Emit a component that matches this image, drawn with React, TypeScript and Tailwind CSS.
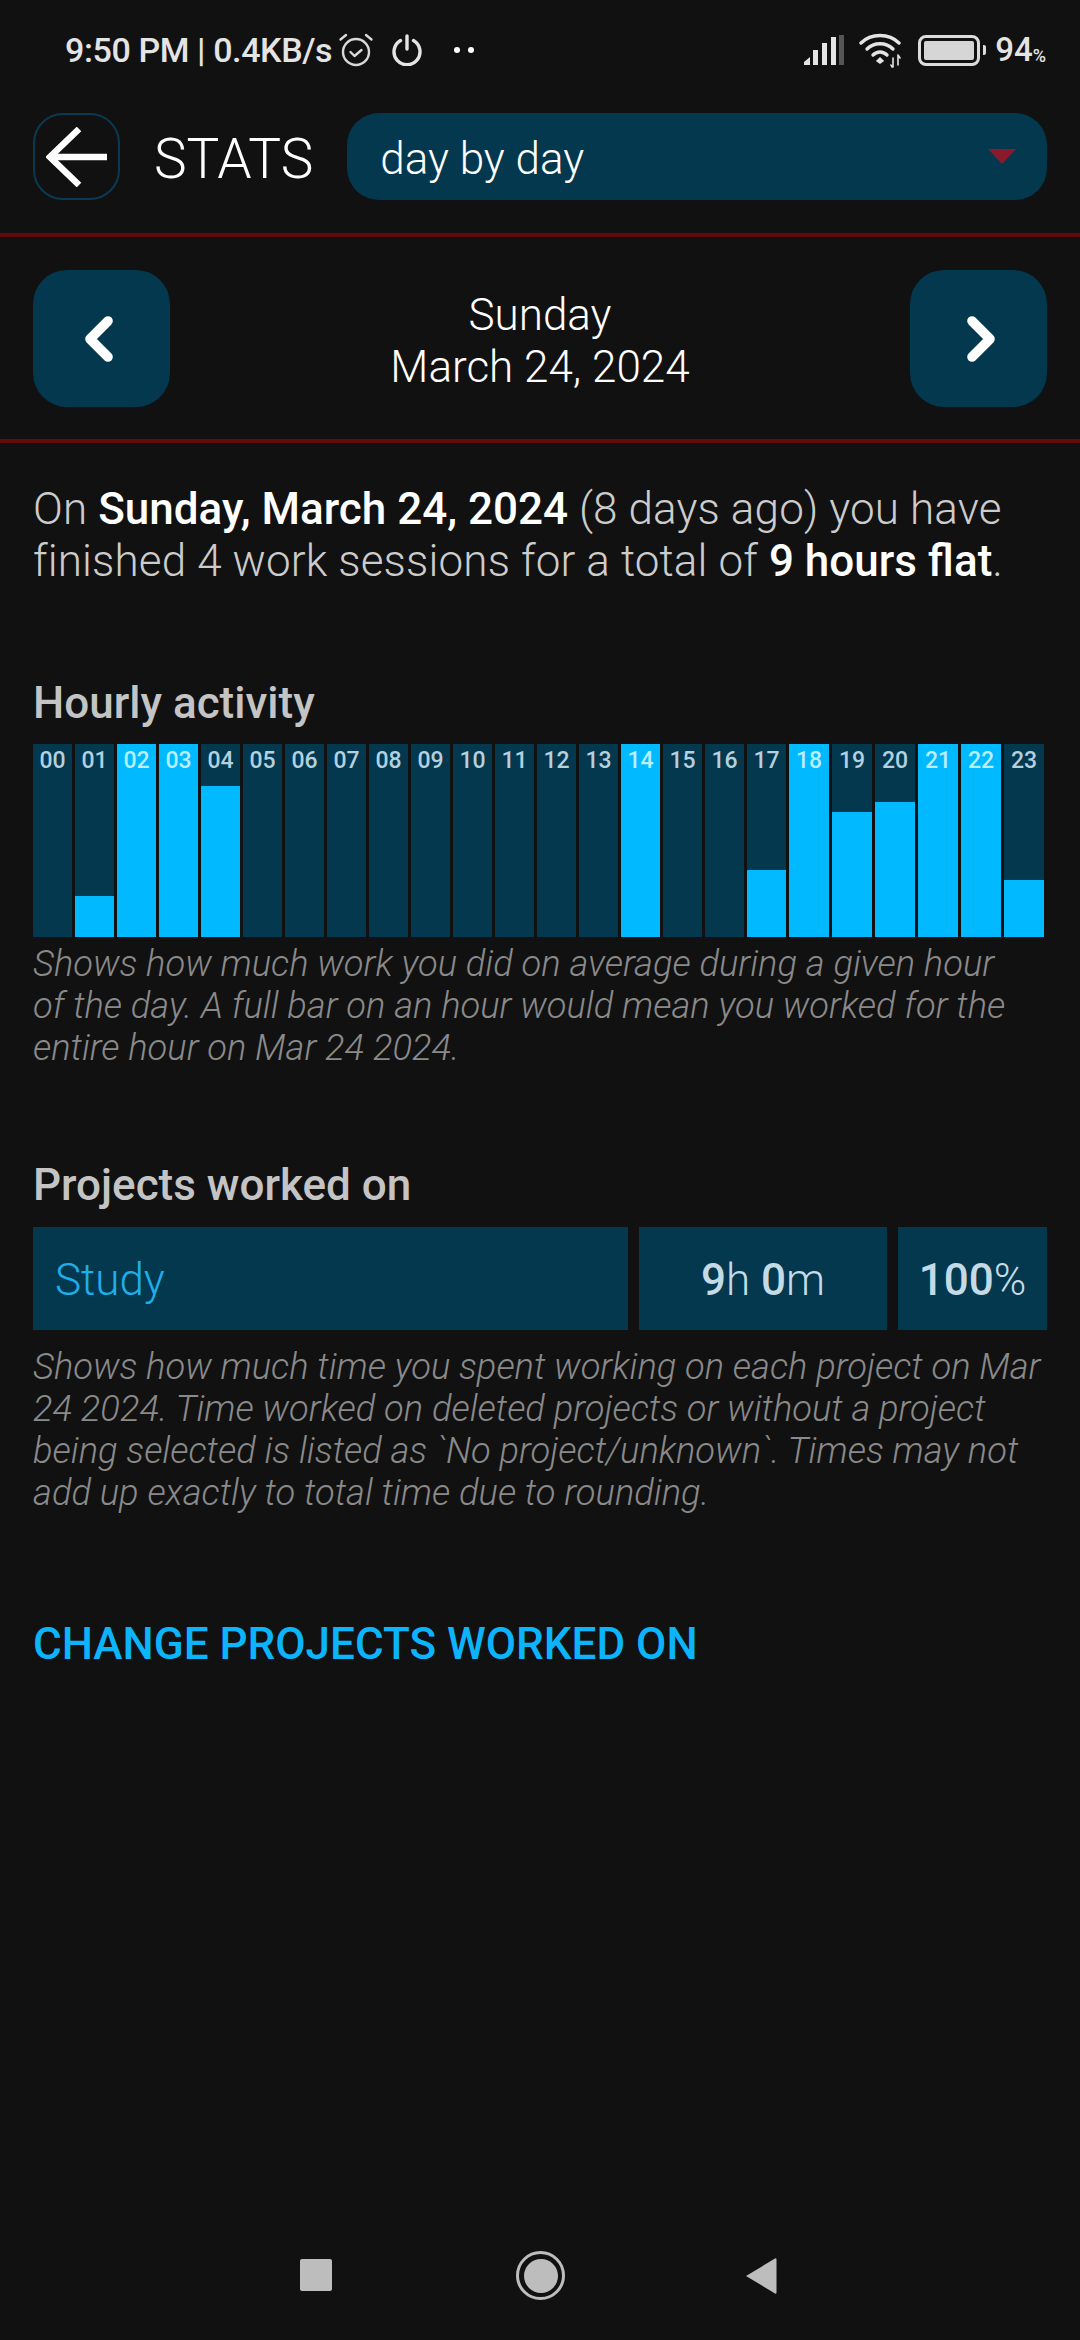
import { ChevronLeft, ChevronRight } from 'lucide-react';

const hours = [
  0, 41, 193, 193, 151, 0, 0, 0, 0, 0, 0, 0, 0, 0, 193, 0, 0, 67, 193, 125, 135, 193, 193, 57,
];

function StatusBar() {
  return (
    <div className="flex h-[113px] items-start justify-between pl-[65px] pr-[34px] pt-[32px] text-[#e4e4e4]">
      <div className="flex items-center">
        <span className="text-[34px] leading-[36px] font-medium tracking-[-0.4px]">9:50 PM | 0.4KB/s</span>
        {/* Alarm */}
        <svg viewBox="0 0 36 36" className="ml-[6px] h-[36px] w-[36px]" fill="none" stroke="#d8d8d8" strokeWidth="2.4" strokeLinecap="round" strokeLinejoin="round">
          <circle cx="18" cy="20" r="13" />
          <path d="M12.5 20l4 4 7-6" />
          <path d="M2.5 7.5L8 3M33.5 7.5L28 3" />
        </svg>
        {/* Power */}
        <svg viewBox="0 0 32 32" className="ml-[17px] h-[32px] w-[32px]" fill="none" stroke="#e4e4e4" strokeWidth="3.4" strokeLinecap="round">
          <path d="M9.5 6.5a13 13 0 1 0 13 0" />
          <path d="M16 2v13" />
        </svg>
        <div className="ml-[31px] flex gap-[8px]">
          <div className="h-[6px] w-[6px] rounded-full bg-white" />
          <div className="h-[6px] w-[6px] rounded-full bg-white" />
        </div>
      </div>
      <div className="flex items-center">
        {/* Signal */}
        <svg viewBox="0 0 40 30" className="h-[30px] w-[40px]">
          <path d="M0 30v-3l6-5v8z" fill="#e4e4e4" />
          <rect x="9" y="15" width="5" height="15" fill="#e4e4e4" />
          <rect x="18" y="8" width="5" height="22" fill="#e4e4e4" />
          <rect x="27" y="2" width="5" height="28" fill="#e4e4e4" />
          <rect x="35" y="0" width="5" height="30" fill="#555555" />
        </svg>
        {/* Wifi */}
        <svg viewBox="0 0 44 36" className="ml-[15px] h-[36px] w-[44px]" fill="none" stroke="#e4e4e4" strokeWidth="3.4" strokeLinecap="round">
          <path d="M2 11C12 1 30 1 40 11" />
          <path d="M8 17c7-7 19-7 26 0" />
          <path d="M14 23c4-4 10-4 14 0" />
          <path d="M18 29l3-3 3 3-3 2z" fill="#e4e4e4" strokeWidth="1.5" />
          <path d="M34 26v9M32 33l1 2M39 23v10M39 23l2 3" strokeWidth="1.6" />
        </svg>
        {/* Battery */}
        <div className="ml-[15px] flex h-[31px] w-[62px] items-stretch rounded-[8px] border-[3px] border-[#dcdcdc] p-[3px]">
          <div className="flex-1 rounded-[2px] bg-[#d6d6d6]" />
        </div>
        <div className="ml-[3px] h-[10px] w-[3px] rounded-r-[2px] bg-[#dcdcdc]" />
        <span className="ml-[9px] text-[33px] leading-[36px] font-medium">94</span>
        <span className="text-[18px] leading-[18px] mt-[12px] font-medium">%</span>
      </div>
    </div>
  );
}

function Header() {
  return (
    <div className="flex items-stretch px-[33px] h-[87px]">
      <div className="flex w-[87px] items-center justify-center rounded-[30px] border-[2px] border-[#0a3a52]">
        <svg viewBox="0 0 62 60" className="h-[60px] w-[62px]" fill="none" stroke="#ffffff" strokeWidth="6.5">
          <path d="M33 2L4 30l29 28" />
          <path d="M4 30h57" />
        </svg>
      </div>
      <span className="ml-[34px] self-center pt-[5px] text-[55px] leading-[60px] font-light text-white">STATS</span>
      <div className="ml-[34px] flex flex-1 items-center justify-between rounded-[32px] bg-[#03384f] pl-[33px] pr-[31px]">
        <span className="pt-[5px] text-[44px] leading-[52px] font-light text-white">day by day</span>
        <div className="h-0 w-0 border-x-[14px] border-t-[15px] border-x-transparent border-t-[#8a1a2b]" />
      </div>
    </div>
  );
}

function NavButton({ next }: { next?: boolean }) {
  return (
    <div className="flex h-[137px] w-[137px] items-center justify-center rounded-[34px] bg-[#03384f] text-white">
      {next ? (
        <ChevronRight size={72} strokeWidth={3.2} className="ml-[5px]" />
      ) : (
        <ChevronLeft size={72} strokeWidth={3.2} className="mr-[5px]" />
      )}
    </div>
  );
}

export default function App() {
  return (
    <div
      className="flex h-[2340px] w-[1080px] flex-col overflow-hidden bg-[#111111]"
      style={{ fontFamily: 'Roboto, sans-serif' }}
    >
      <StatusBar />
      <Header />

      <div className="mt-[33px] h-[4px] bg-[#640a0c]" />

      {/* Date picker */}
      <div className="flex items-center justify-between px-[33px] py-[33px]">
        <NavButton />
        <div className="pt-[4px] text-center text-[44px] leading-[52px] font-light text-white">
          <div>Sunday</div>
          <div>March 24, 2024</div>
        </div>
        <NavButton next />
      </div>

      <div className="-mt-[1px] h-[4px] bg-[#640a0c]" />

      <div className="px-[33px]">
        {/* Summary */}
        <p className="mt-[40px] text-[44px] leading-[52px] font-light tracking-[0.14px] text-[#cccccc]">
          On <b className="font-medium tracking-normal text-white">Sunday, March 24, 2024</b> (8 days ago) you have finished 4 work sessions for a total of <b className="font-medium tracking-normal text-white">9 hours flat</b>.
        </p>

        {/* Hourly activity */}
        <h2 className="mt-[92px] text-[44px] leading-[48px] font-medium text-[#c4c4c4]">Hourly activity</h2>
        <div className="mt-[17px] grid h-[193px] grid-cols-[repeat(18,39px)_repeat(6,40px)] gap-[3px]">
          {hours.map((h, i) => (
            <div key={i} className="relative bg-[#03384f]">
              <div className="absolute inset-x-0 bottom-0 bg-[#00b9ff]" style={{ height: h }} />
              <span
                className={`absolute inset-x-0 top-[4px] text-center text-[23px] leading-[26px] font-medium ${
                  h > 170 ? 'text-[#b8eeff]' : 'text-[#b4d0de]'
                }`}
              >
                {String(i).padStart(2, '0')}
              </span>
            </div>
          ))}
        </div>
        <p className="mt-[6px] pr-[29px] text-[36.3px] leading-[42px] font-light italic text-[#8a8a8a]">
          Shows how much work you did on average during a given hour of the day. A full bar on an hour would mean you worked for the entire hour on Mar 24 2024.
        </p>

        {/* Projects */}
        <h2 className="mt-[92px] text-[44px] leading-[48px] font-medium text-[#c4c4c4]">Projects worked on</h2>
        <div className="mt-[18px] flex h-[103px] gap-[11px] text-[44px] font-light">
          <div className="flex flex-1 items-center bg-[#03384f] px-[22px] pt-[2px] text-[#1faee8]">Study</div>
          <div className="flex w-[248px] items-center justify-center bg-[#03384f] pt-[2px] text-[#c4dbe6]">
            <b className="font-medium">9</b>h&nbsp;<b className="font-medium">0</b>m
          </div>
          <div className="flex w-[149px] items-center justify-center bg-[#03384f] pt-[2px] text-[#c4dbe6]">
            <b className="font-medium">100</b>%
          </div>
        </div>
        <p className="mt-[16px] text-[36.3px] leading-[42px] font-light italic text-[#8a8a8a]">
          Shows how much time you spent working on each project on Mar 24 2024. Time worked on deleted projects or without a project being selected is listed as `No project/unknown`. Times may not add up exactly to total time due to rounding.
        </p>

        <div className="mt-[105px] text-[44px] leading-[50px] font-medium text-[#0cb4fb]">CHANGE PROJECTS WORKED ON</div>
      </div>

      {/* Nav bar */}
      <div className="mt-auto flex h-[89px] items-start pl-[300px]">
        <div className="mt-[8px] h-[32px] w-[32px] rounded-[2px] bg-[#bdbdbd]" />
        <div className="ml-[184px] flex h-[49px] w-[49px] items-center justify-center rounded-full border-[3px] border-[#bdbdbd]">
          <div className="h-[34px] w-[34px] rounded-full bg-[#bdbdbd]" />
        </div>
        <svg viewBox="0 0 32 38" className="ml-[180px] mt-[6px] h-[38px] w-[32px]">
          <path d="M1 19L30 1.5a1 1 0 0 1 1.5 1v33a1 1 0 0 1-1.5 1z" fill="#bdbdbd" />
        </svg>
      </div>
    </div>
  );
}
